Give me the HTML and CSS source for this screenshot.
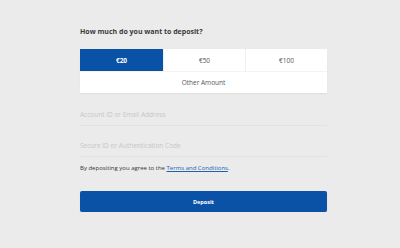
FILE: index.html
```html
<!DOCTYPE html>
<html>
<head>
<meta charset="utf-8">
<link rel="stylesheet" href="styles.css">
</head>
<body>
<main class="form">
  <h1 class="title">How much do you want to deposit?</h1>
  <div class="amounts">
    <div class="amount selected">€20</div>
    <div class="amount">€50</div>
    <div class="amount">€100</div>
    <div class="amount other">Other Amount</div>
  </div>
  <div class="field field-first">Account ID or Email Address</div>
  <div class="field">Secure ID or Authentication Code</div>
  <p class="terms">By depositing you agree to the <a href="#">Terms and Conditions</a>.</p>
  <button class="deposit">Deposit</button>
</main>
</body>
</html>
```
FILE: styles.css
```css
html, body {
  margin: 0;
  padding: 0;
  background: #ebebeb;
  font-family: "Open Sans", "Noto Sans", sans-serif;
}
.form {
  width: 247px;
  margin-left: 80px;
  padding-top: 26px;
}
.title {
  margin: 0;
  font-size: 7px;
  font-weight: 700;
  color: #3a3a3a;
  line-height: 12px;
}
.amounts {
  margin-top: 11px;
  display: grid;
  grid-template-columns: 83px 82px 82px;
  grid-template-rows: 22px 22px;
  background: #fff;
  box-shadow: 0 1px 1px rgba(0,0,0,0.05);
}
.amount {
  display: flex;
  align-items: center;
  justify-content: center;
  font-size: 6.5px;
  color: #555;
  border-left: 1px solid #f0f0f0;
}
.amount:first-child { border-left: none; }
.amount.selected {
  background: #0a52a5;
  color: #fff;
  font-weight: 700;
}
.amount.other {
  grid-column: 1 / 4;
  border-left: none;
  border-top: 1px solid #f3f3f3;
}
.field {
  font-size: 6.5px;
  color: #c6c6c6;
  height: 21px;
  line-height: 12px;
  padding-top: 4px;
  box-sizing: border-box;
  border-bottom: 1px solid #e2e2e2;
  margin-top: 10px;
}
.field-first {
  margin-top: 12px;
}
.terms {
  margin: 6px 0 0;
  font-size: 6px;
  line-height: 10px;
  color: #333;
}
.terms a {
  color: #1c62b0;
}
.deposit {
  display: block;
  width: 100%;
  height: 21px;
  margin-top: 18px;
  background: #0a52a5;
  border: none;
  border-radius: 2px;
  color: #fff;
  font-family: inherit;
  font-size: 5.5px;
  font-weight: 700;
  box-shadow: 0 1px 1px rgba(0,0,0,0.15);
  padding: 0;
}
```
